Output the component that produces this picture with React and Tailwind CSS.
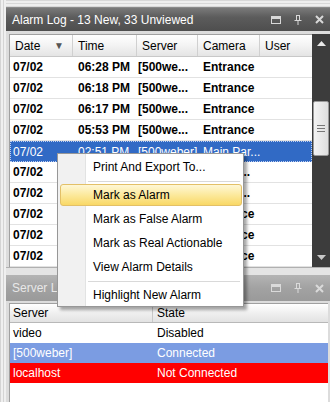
import React from "react";

function TitleIcons({ color }) {
  return (
    <div className="flex items-center gap-[13px] pr-[6px]">
      <svg width="10" height="8" viewBox="0 0 10 8">
        <rect x="0.5" y="0.5" width="9" height="7" fill="none" stroke={color} />
        <rect x="0" y="0" width="10" height="3" fill={color} />
      </svg>
      <svg width="8" height="10" viewBox="0 0 8 10">
        <path d="M2 0.5H6M2.5 0.5V5.5M5.5 0.5V5.5M0.5 5.5H7.5M4 5.5V10" stroke={color} fill="none" />
      </svg>
      <svg width="9" height="9" viewBox="0 0 9 9">
        <path d="M1 1L8 8M8 1L1 8" stroke={color} strokeWidth="2" />
      </svg>
    </div>
  );
}

const alarms = [
  { date: "07/02", time: "06:28 PM", server: "[500we...", camera: "Entrance" },
  { date: "07/02", time: "06:18 PM", server: "[500we...", camera: "Entrance" },
  { date: "07/02", time: "06:17 PM", server: "[500we...", camera: "Entrance" },
  { date: "07/02", time: "05:53 PM", server: "[500we...", camera: "Entrance" },
  { date: "07/02", time: "02:51 PM", server: "[500weber]", camera: "Main Par...", selected: true },
  { date: "07/02", time: "02:47 PM", server: "[500we...", camera: "Main P..." },
  { date: "07/02", time: "02:40 PM", server: "[500we...", camera: "Main P..." },
  { date: "07/02", time: "01:12 PM", server: "[500we...", camera: "Entrance" },
  { date: "07/02", time: "12:58 PM", server: "[500we...", camera: "Entrance" },
  { date: "07/02", time: "12:31 PM", server: "[500we...", camera: "Entrance" },
];

const servers = [
  { name: "video", state: "Disabled", cls: "bg-white text-black" },
  { name: "[500weber]", state: "Connected", cls: "bg-[#7b9ce2] text-white" },
  { name: "localhost", state: "Not Connected", cls: "bg-[#ff0000] text-white" },
];

function ContextMenu() {
  const Item = ({ label, active }) => (
    <div className="h-[24px] flex items-center relative">
      {active && (
        <div className="absolute left-[2px] right-[1px] top-[1px] bottom-[1px] rounded-[3px] border border-[#e3c067] bg-[linear-gradient(#fef7d6,#fce99c_50%,#f9d866)]" />
      )}
      <span className="relative pl-[35px] text-[12px] text-black">{label}</span>
    </div>
  );
  const Sep = () => (
    <div className="h-[4px] flex items-center pl-[30px] pr-[3px]">
      <div className="h-px w-full bg-[#d9d9d9]" />
    </div>
  );
  return (
    <div className="absolute left-[57px] top-[153px] w-[187px] h-[154px] bg-white border border-[#979797] shadow-[3px_3px_3px_rgba(0,0,0,0.35)] py-px">
      <div className="absolute left-0 top-0 bottom-0 w-[28px] bg-[#f1f1f1] border-r border-[#e2e3e3]" />
      <div className="relative">
        <Item label="Print And Export To..." />
        <Sep />
        <Item label="Mark as Alarm" active />
        <Item label="Mark as False Alarm" />
        <Item label="Mark as Real Actionable" />
        <Item label="View Alarm Details" />
        <Sep />
        <Item label="Highlight New Alarm" />
      </div>
    </div>
  );
}

export default function App() {
  const headerCls =
    "h-full flex items-center pl-[5px] border-r border-[#d0d0d0] text-[12px] text-black";
  return (
    <div
      className="relative w-[330px] h-[402px] overflow-hidden flex bg-[#e6e6e6]"
      style={{ fontFamily: "'Liberation Sans', Arial, sans-serif" }}
    >
      <div className="w-[6px] h-full bg-[repeating-linear-gradient(90deg,#d4d4d4_0px,#d4d4d4_1px,#efefef_1px,#efefef_3px)]" />
      <div className="flex-1 flex flex-col">
        <div className="h-[7px] bg-[repeating-linear-gradient(180deg,#d8d8d8_0px,#d8d8d8_1px,#eeeeee_1px,#eeeeee_3px)]" />

        {/* Alarm Log panel */}
        <div className="h-[24px] flex items-center justify-between bg-[linear-gradient(#7a7a7a,#5c5c5c_40%,#4e4e4e)] border-t border-[#8a8a8a]">
          <span className="pl-[6px] text-[12px] text-white">Alarm Log - 13 New, 33 Unviewed</span>
          <TitleIcons color="#d8d8d8" />
        </div>
        <div className="h-[236px] bg-[#dcdcdc] pt-[3px] pl-[3px] flex">
          <div className="flex-1 flex flex-col bg-white border-l border-t border-[#a0a0a0] overflow-hidden">
            <div className="h-[22px] flex shrink-0 bg-[linear-gradient(#ffffff,#f3f3f3_50%,#e4e4e4)] border-b border-[#c8c8c8]">
              <div className={headerCls + " w-[63px] justify-between pr-[8px]"}>
                <span>Date</span>
                <span className="text-[10px] text-[#555]">▼</span>
              </div>
              <div className={headerCls + " w-[64px]"}>Time</div>
              <div className={headerCls + " w-[61px]"}>Server</div>
              <div className={headerCls + " w-[62px]"}>Camera</div>
              <div className={headerCls + " w-[51px] border-r-0"}>User</div>
            </div>
            {alarms.map((r, i) => (
              <div
                key={i}
                className={
                  "h-[21px] shrink-0 flex items-center text-[12px] " +
                  (r.selected
                    ? "bg-[#316ac5] text-white outline-1 outline-dotted outline-[#c0d0f0] -outline-offset-1"
                    : "font-bold text-black border-b border-[#e2e2e2]")
                }
              >
                <div className="w-[63px] pl-[3px] whitespace-nowrap overflow-hidden">{r.date}</div>
                <div className="w-[64px] pl-[5px] whitespace-nowrap overflow-hidden">{r.time}</div>
                <div className="w-[61px] pl-[1px] whitespace-nowrap overflow-hidden">{r.server}</div>
                <div className="w-[62px] pl-[5px] whitespace-nowrap overflow-hidden">{r.camera}</div>
                <div className="w-[51px]" />
              </div>
            ))}
          </div>
          <div className="w-[18px] flex flex-col bg-[#3c3c3c]">
            <div className="h-[19px] flex items-center justify-center">
              <svg width="9" height="5" viewBox="0 0 9 5">
                <path d="M0 5L4.5 0L9 5Z" fill="#e8e8e8" />
              </svg>
            </div>
            <div className="h-[48px]" />
            <div className="h-[55px] mx-px rounded-[2px] bg-[linear-gradient(90deg,#f4f4f4,#dedede)] border border-[#9a9a9a] flex flex-col items-center justify-center gap-[2px]">
              <div className="w-[8px] h-px bg-[#777]" />
              <div className="w-[8px] h-px bg-[#777]" />
              <div className="w-[8px] h-px bg-[#777]" />
            </div>
            <div className="flex-1" />
            <div className="h-[19px] flex items-center justify-center">
              <svg width="9" height="5" viewBox="0 0 9 5">
                <path d="M0 0L4.5 5L9 0Z" fill="#c8c8c8" />
              </svg>
            </div>
          </div>
        </div>
        <div className="h-[8px] bg-[#e4e4e4] border-t border-[#b0b0b0]" />

        {/* Server List panel */}
        <div className="h-[26px] flex items-center justify-between bg-[linear-gradient(#b4b4b4,#a2a2a2_50%,#9a9a9a)]">
          <span className="pl-[6px] text-[12px] text-[#e8e8e8]">Server List</span>
          <TitleIcons color="#dadada" />
        </div>
        <div className="flex-1 bg-[#dcdcdc] pt-[2px] pl-[3px] pr-[2px] flex">
          <div className="flex-1 bg-white border-l border-t border-[#a0a0a0] flex flex-col">
            <div className="h-[19px] flex bg-[linear-gradient(#ffffff,#f0f0f0_50%,#e2e2e2)] border-b border-[#b8b8b8]">
              <div className="w-[143px] h-full flex items-center pl-[3px] border-r border-[#c8c8c8] text-[12px]">Server</div>
              <div className="flex-1 h-full flex items-center pl-[4px] text-[12px]">State</div>
            </div>
            {servers.map((s, i) => (
              <div key={i} className={"h-[20px] flex items-center text-[12px] " + s.cls}>
                <div className="w-[143px] pl-[3px]">{s.name}</div>
                <div className="flex-1 pl-[4px]">{s.state}</div>
              </div>
            ))}
          </div>
        </div>
      </div>
      <ContextMenu />
    </div>
  );
}
